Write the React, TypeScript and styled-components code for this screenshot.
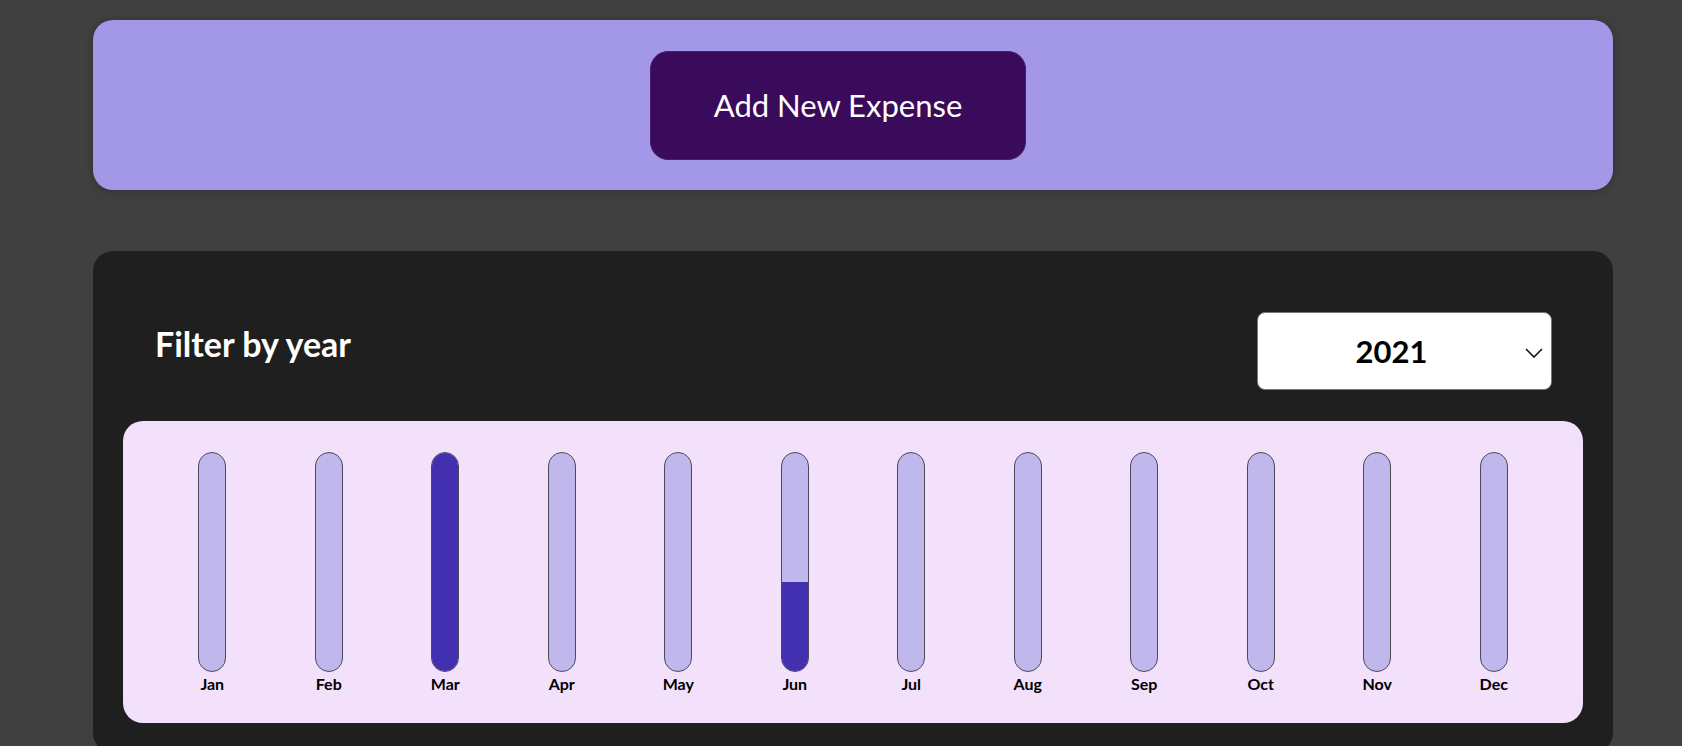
import styled, { createGlobalStyle } from "styled-components";

type MonthData = {
  label: string;
  value: number;
};

const months: MonthData[] = [
  { label: "Jan", value: 0 },
  { label: "Feb", value: 0 },
  { label: "Mar", value: 100 },
  { label: "Apr", value: 0 },
  { label: "May", value: 0 },
  { label: "Jun", value: 41 },
  { label: "Jul", value: 0 },
  { label: "Aug", value: 0 },
  { label: "Sep", value: 0 },
  { label: "Oct", value: 0 },
  { label: "Nov", value: 0 },
  { label: "Dec", value: 0 },
];

export default function App() {
  return (
    <>
      <GlobalStyle />
      <Page>
        <NewExpenseCard>
          <AddButton type="button">Add New Expense</AddButton>
        </NewExpenseCard>

        <ExpensesPanel>
          <FilterRow>
            <FilterLabel>Filter by year</FilterLabel>
            <YearSelect>
              <span>2021</span>
              <Chevron width="18" height="10" viewBox="0 0 18 10">
                <path d="M1 1l8 8 8-8" fill="none" stroke="#111" strokeWidth="1.6" />
              </Chevron>
            </YearSelect>
          </FilterRow>

          <Chart>
            {months.map((m) => (
              <ChartColumn key={m.label}>
                <BarTrack>
                  <BarFill style={{ height: `${m.value}%` }} />
                </BarTrack>
                <BarLabel>{m.label}</BarLabel>
              </ChartColumn>
            ))}
          </Chart>
        </ExpensesPanel>
      </Page>
    </>
  );
}

const GlobalStyle = createGlobalStyle`
  html, body {
    margin: 0;
    padding: 0;
    background: #404040;
    font-family: Lato, "Open Sans", sans-serif;
  }
  * {
    box-sizing: border-box;
  }
`;

const Page = styled.div`
  width: 1520px;
  margin-left: 93px;
  padding-top: 20px;
`;

const NewExpenseCard = styled.div`
  height: 170px;
  background: #a397e7;
  border-radius: 20px;
  box-shadow: 0 1px 8px rgba(0, 0, 0, 0.25);
  display: flex;
  align-items: center;
  justify-content: center;
  padding-right: 30px;
`;

const AddButton = styled.button`
  width: 376px;
  height: 109px;
  background: #3a0b5a;
  border: 1px solid #4a1d6e;
  border-radius: 18px;
  color: #fff;
  font-family: Lato, "Open Sans", sans-serif;
  font-size: 31px;
  font-weight: 400;
  cursor: pointer;
`;

const ExpensesPanel = styled.div`
  margin-top: 61px;
  background: #1f1f1f;
  border-radius: 20px;
  padding: 61px 30px 30px;
`;

const FilterRow = styled.div`
  display: flex;
  align-items: center;
  justify-content: space-between;
  padding: 0 31px 0 32px;
  margin-bottom: 31px;
`;

const FilterLabel = styled.h2`
  margin: 0 0 16px;
  color: #fff;
  font-size: 34px;
  font-weight: 700;
`;

const YearSelect = styled.div`
  position: relative;
  width: 295px;
  height: 78px;
  background: #fff;
  border: 1px solid #767676;
  border-radius: 8px;
  display: flex;
  align-items: center;
  justify-content: center;
  padding-right: 26px;
  font-size: 31px;
  font-weight: 700;
  color: #000;
`;

const Chevron = styled.svg`
  position: absolute;
  right: 8px;
  top: 35px;
`;

const Chart = styled.div`
  height: 302px;
  background: #f3e1fc;
  border-radius: 20px;
  padding: 31px 31px 0;
  display: grid;
  grid-template-columns: repeat(12, 1fr);
`;

const ChartColumn = styled.div`
  display: flex;
  flex-direction: column;
  align-items: center;
`;

const BarTrack = styled.div`
  width: 28px;
  height: 220px;
  background: #c0b8ec;
  border: 1px solid #4d4a58;
  border-radius: 14px;
  overflow: hidden;
  display: flex;
  flex-direction: column;
  justify-content: flex-end;
`;

const BarFill = styled.div`
  background: #4330b0;
`;

const BarLabel = styled.span`
  margin-top: 2px;
  font-size: 16px;
  font-weight: 700;
  color: #000;
`;
